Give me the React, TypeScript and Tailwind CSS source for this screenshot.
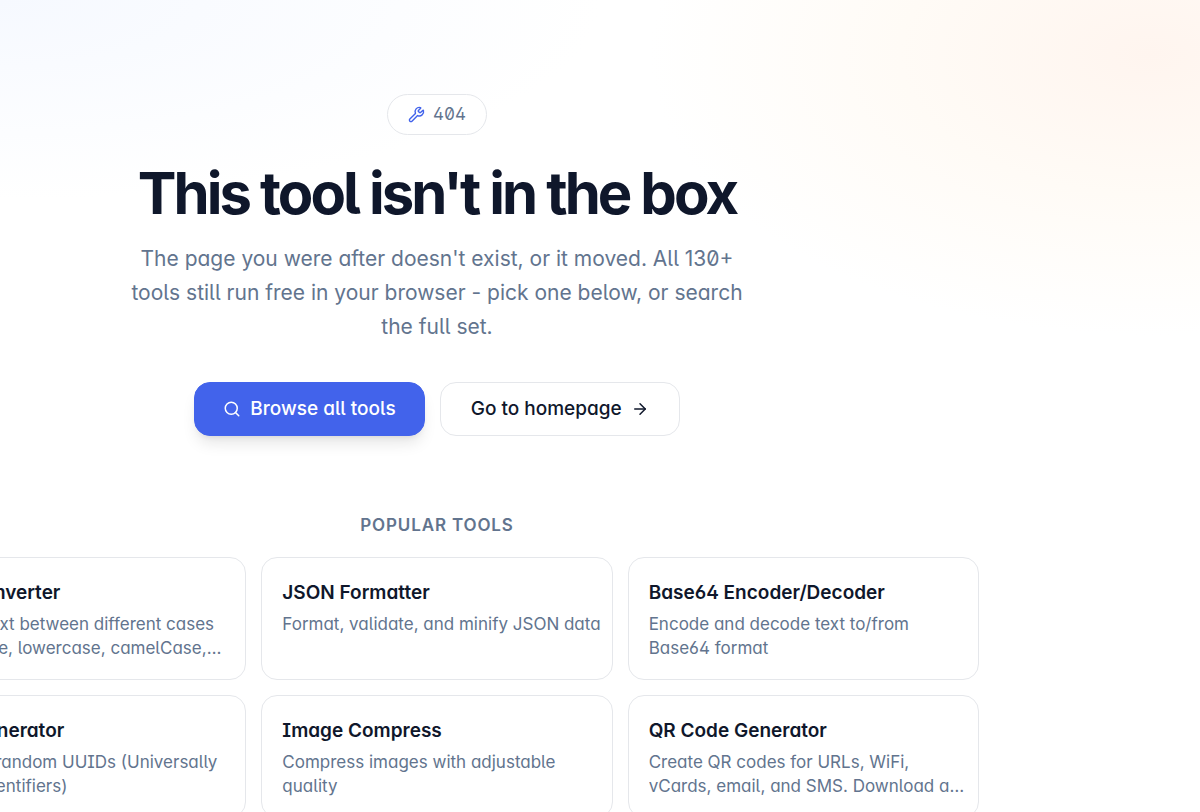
import { ArrowRight, Search, Wrench } from "lucide-react";

type Tool = {
  name: string;
  description: string;
  href: string;
};

const tools: Tool[] = [
  {
    name: "Case Converter",
    description:
      "Convert text between different cases (uppercase, lowercase, camelCase, snake_case and more)",
    href: "#case-converter",
  },
  {
    name: "JSON Formatter",
    description: "Format, validate, and minify JSON data",
    href: "#json-formatter",
  },
  {
    name: "Base64 Encoder/Decoder",
    description: "Encode and decode text to/from Base64 format",
    href: "#base64",
  },
  {
    name: "UUID Generator",
    description: "Generate random UUIDs (Universally Unique Identifiers)",
    href: "#uuid-generator",
  },
  {
    name: "Image Compress",
    description: "Compress images with adjustable quality",
    href: "#image-compress",
  },
  {
    name: "QR Code Generator",
    description:
      "Create QR codes for URLs, WiFi, vCards, email, and SMS. Download a PNG or SVG",
    href: "#qr-code",
  },
];

export default function App() {
  return (
    <div className="h-screen overflow-hidden bg-white bg-[radial-gradient(ellipse_500px_280px_at_1150px_55px,#fff5ef_0%,#fffbf6_50%,transparent_100%),radial-gradient(ellipse_600px_200px_at_0px_0px,#f6f9ff_0%,transparent_100%)] font-[Inter,sans-serif] text-slate-900 [font-feature-settings:'cv02','cv03','cv04','cv05','cv08','cv11','zero']">
      <main className="-ml-[105px] mr-[221px] flex flex-col items-center pt-[94px]">
        <div className="flex items-center gap-2 rounded-full border border-gray-200 bg-white px-5 py-2 text-[17px] leading-[23px] text-slate-500">
          <Wrench className="size-[17px] text-[#4263eb]" />
          <span className="tabular-nums">404</span>
        </div>

        <h1 className="mt-7 text-center text-[58px] font-bold leading-[60px] tracking-tighter">
          This tool isn't in the box
        </h1>

        <p className="mt-[19px] max-w-[620px] text-center text-[21px] leading-[34px] text-slate-500">
          The page you were after doesn't exist, or it moved. All 130+ tools
          still run free in your browser - pick one below, or search the full
          set.
        </p>

        <div className="mt-[38px] flex gap-[15px] text-[19px] font-medium leading-7">
          <a
            href="#tools"
            className="flex items-center gap-[9px] rounded-2xl border border-[#4263eb] bg-[#4263eb] px-7 py-3 text-white shadow-lg shadow-black/10"
          >
            <Search className="size-[18px]" />
            Browse all tools
          </a>
          <a
            href="#home"
            className="flex items-center gap-[9px] rounded-2xl border border-gray-200 bg-white px-[30px] py-3"
          >
            Go to homepage
            <ArrowRight className="size-[18px]" />
          </a>
        </div>

        <h2 className="mt-[77px] text-[17px] font-semibold uppercase leading-6 tracking-wider text-slate-500">
          Popular tools
        </h2>

        <div className="mt-5 grid w-full grid-cols-3 gap-[15px]">
          {tools.map((tool) => (
            <ToolCard key={tool.name} tool={tool} />
          ))}
        </div>
      </main>
    </div>
  );
}

function ToolCard({ tool }: { tool: Tool }) {
  return (
    <a
      href={tool.href}
      className="block rounded-2xl border border-gray-200 bg-white pb-[19px] pl-5 pr-[9px] pt-5"
    >
      <h3 className="text-[19px] font-semibold leading-[30px]">{tool.name}</h3>
      <p className="mt-1 line-clamp-2 text-[17px] leading-6 text-slate-500">
        {tool.description}
      </p>
    </a>
  );
}
